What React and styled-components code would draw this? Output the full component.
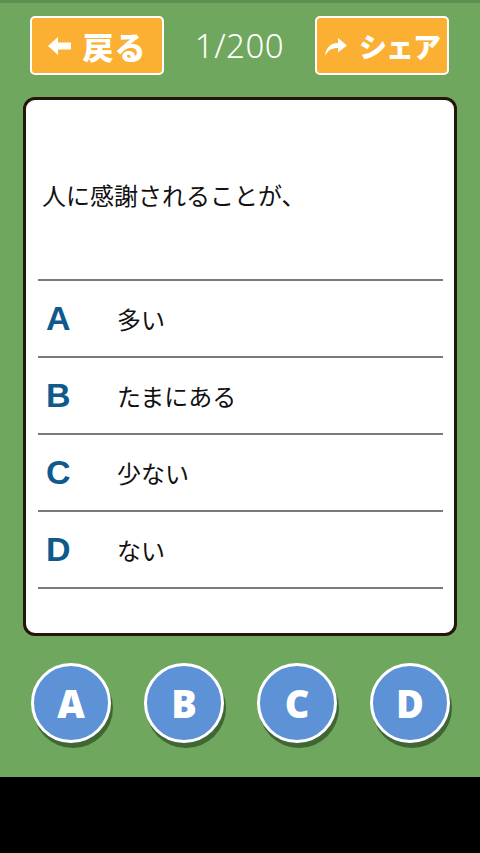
import styled, { createGlobalStyle } from 'styled-components';

const COLORS = {
  green: '#6ea75d',
  greenDark: '#5d914f',
  orange: '#fcb033',
  cardBorder: '#241608',
  line: '#7a7a7a',
  letter: '#0f5a8c',
  circle: '#5e92d6',
  circleShadow: '#3f6634',
};

const JP = `"Noto Sans CJK JP", "Noto Sans", sans-serif`;

const GlobalStyle = createGlobalStyle`
  html, body {
    margin: 0;
    padding: 0;
    background: #000;
  }
  * { box-sizing: border-box; }
`;

const OPTIONS = [
  { key: 'A', text: '多い' },
  { key: 'B', text: 'たまにある' },
  { key: 'C', text: '少ない' },
  { key: 'D', text: 'ない' },
];

function BackArrow() {
  return (
    <svg width="24" height="20" viewBox="0 0 24 20">
      <path d="M0 10 L10 1 L10 6.5 L23 6.5 L23 13.5 L10 13.5 L10 19 Z" fill="#fff" />
    </svg>
  );
}

function ShareArrow() {
  return (
    <svg width="24" height="22" viewBox="0 0 24 22">
      <path
        d="M1 21 C2 12 7 8 14 8 L14 3 L23 10.5 L14 17.5 L14 13 C8 13 4 15 1 21 Z"
        fill="#fff"
      />
    </svg>
  );
}

function App() {
  return (
    <>
      <GlobalStyle />
      <Screen>
        <Header>
          <NavButton>
            <BackArrow />
            <NavLabel>戻る</NavLabel>
          </NavButton>
          <Counter>1/200</Counter>
          <NavButton>
            <ShareArrow />
            <NavLabel $tight>シェア</NavLabel>
          </NavButton>
        </Header>

        <Card>
          <Question>人に感謝されることが、</Question>
          {OPTIONS.map((o) => (
            <OptionRow key={o.key}>
              <OptionKey>{o.key}</OptionKey>
              <OptionText>{o.text}</OptionText>
            </OptionRow>
          ))}
        </Card>

        <Answers>
          {OPTIONS.map((o) => (
            <AnswerButton key={o.key}>{o.key}</AnswerButton>
          ))}
        </Answers>
      </Screen>
    </>
  );
}

const Screen = styled.div`
  height: 777px;
  background-color: ${COLORS.green};
  border-top: 3px solid ${COLORS.greenDark};
  display: flex;
  flex-direction: column;
`;

const Header = styled.header`
  display: flex;
  align-items: center;
  justify-content: space-between;
  padding: 13px 31px 0 30px;
`;

const NavButton = styled.button`
  width: 134px;
  height: 59px;
  background-color: ${COLORS.orange};
  border: 2px solid #fff;
  border-radius: 5px;
  display: flex;
  align-items: center;
  justify-content: center;
  gap: 11px;
  padding: 0;
  cursor: pointer;
`;

const NavLabel = styled.span`
  font-family: ${JP};
  font-weight: 900;
  font-size: ${(p) => (p.$tight ? '28px' : '31px')};
  line-height: 1;
  color: #fff;
  white-space: nowrap;
  letter-spacing: ${(p) => (p.$tight ? '-1px' : '1px')};
`;

const Counter = styled.span`
  font-family: "Noto Sans", "Open Sans", sans-serif;
  font-weight: 300;
  font-size: 33px;
  color: #fff;
  letter-spacing: 0.5px;
`;

const Card = styled.main`
  margin: 22px 23px 0;
  height: 539px;
  background: #fff;
  border: 3px solid ${COLORS.cardBorder};
  border-radius: 12px;
  padding: 0 11px 0 12px;
  display: flex;
  flex-direction: column;
`;

const Question = styled.p`
  margin: 0;
  height: 181px;
  padding: 10px 0 0 4px;
  display: flex;
  align-items: center;
  border-bottom: 2px solid ${COLORS.line};
  font-family: ${JP};
  font-size: 24px;
  color: #111;
`;

const OptionRow = styled.div`
  height: 77px;
  display: flex;
  align-items: center;
  border-bottom: 2px solid ${COLORS.line};
`;

const OptionKey = styled.span`
  width: 79px;
  padding-left: 8px;
  font-family: "Liberation Sans", Arial, sans-serif;
  font-weight: 700;
  font-size: 34px;
  color: ${COLORS.letter};
`;

const OptionText = styled.span`
  font-family: ${JP};
  font-size: 24px;
  color: #111;
`;

const Answers = styled.div`
  display: flex;
  justify-content: space-between;
  padding: 27px 30px 0 31px;
`;

const AnswerButton = styled.button`
  width: 80px;
  height: 80px;
  border-radius: 50%;
  background-color: ${COLORS.circle};
  border: 3px solid #fff;
  box-shadow: 2px 5px 0 ${COLORS.circleShadow};
  color: #fff;
  font-family: "Open Sans", "Noto Sans", sans-serif;
  font-weight: 800;
  font-size: 38px;
  line-height: 1;
  display: flex;
  align-items: center;
  justify-content: center;
  padding: 0;
  cursor: pointer;
`;

export default App;
